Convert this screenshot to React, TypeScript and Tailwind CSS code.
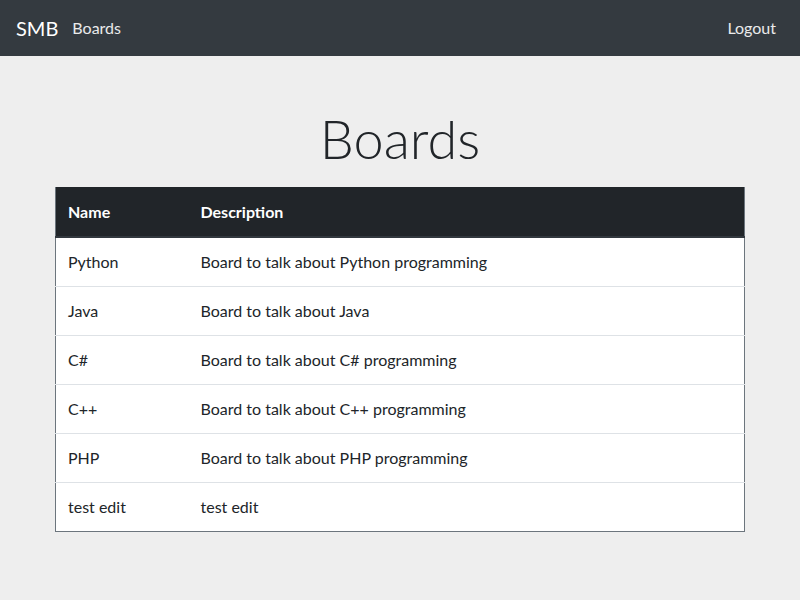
const boards = [
  { name: 'Python', description: 'Board to talk about Python programming' },
  { name: 'Java', description: 'Board to talk about Java' },
  { name: 'C#', description: 'Board to talk about C# programming' },
  { name: 'C++', description: 'Board to talk about C++ programming' },
  { name: 'PHP', description: 'Board to talk about PHP programming' },
  { name: 'test edit', description: 'test edit' },
]

export default function App() {
  return (
    <div className="min-h-screen bg-[#eeeeee] text-[#212529] font-['Lato','Noto_Sans',sans-serif]">
      {/* navbar */}
      <nav className="h-14 bg-[#343a40] flex items-center justify-between px-4">
        <div className="flex items-center">
          <span className="text-xl text-white mr-[6px]">SMB</span>
          <a className="text-base text-white/90 px-2">Boards</a>
        </div>
        <a className="text-base text-white/90 px-2">Logout</a>
      </nav>

      <div className="px-[55px] pt-[50px]">
        <h1 className="text-center text-[54px] font-light leading-[65px] mb-4">Boards</h1>
        <table className="w-full table-fixed border-collapse bg-white border border-[#6c757d] border-t-0 text-base">
          <thead>
            <tr className="bg-[#212529] text-white">
              <th className="text-left font-bold px-3 h-[50px] w-[133px] border-b-2 border-[#32383e]">Name</th>
              <th className="text-left font-bold px-3 h-[50px] border-b-2 border-[#32383e]">Description</th>
            </tr>
          </thead>
          <tbody>
            {boards.map(b => (
              <tr key={b.name} className="border-t border-[#dee2e6] first:border-t-0">
                <td className="px-3 h-[49px]">{b.name}</td>
                <td className="px-3 h-[49px]">{b.description}</td>
              </tr>
            ))}
          </tbody>
        </table>
      </div>
    </div>
  )
}
